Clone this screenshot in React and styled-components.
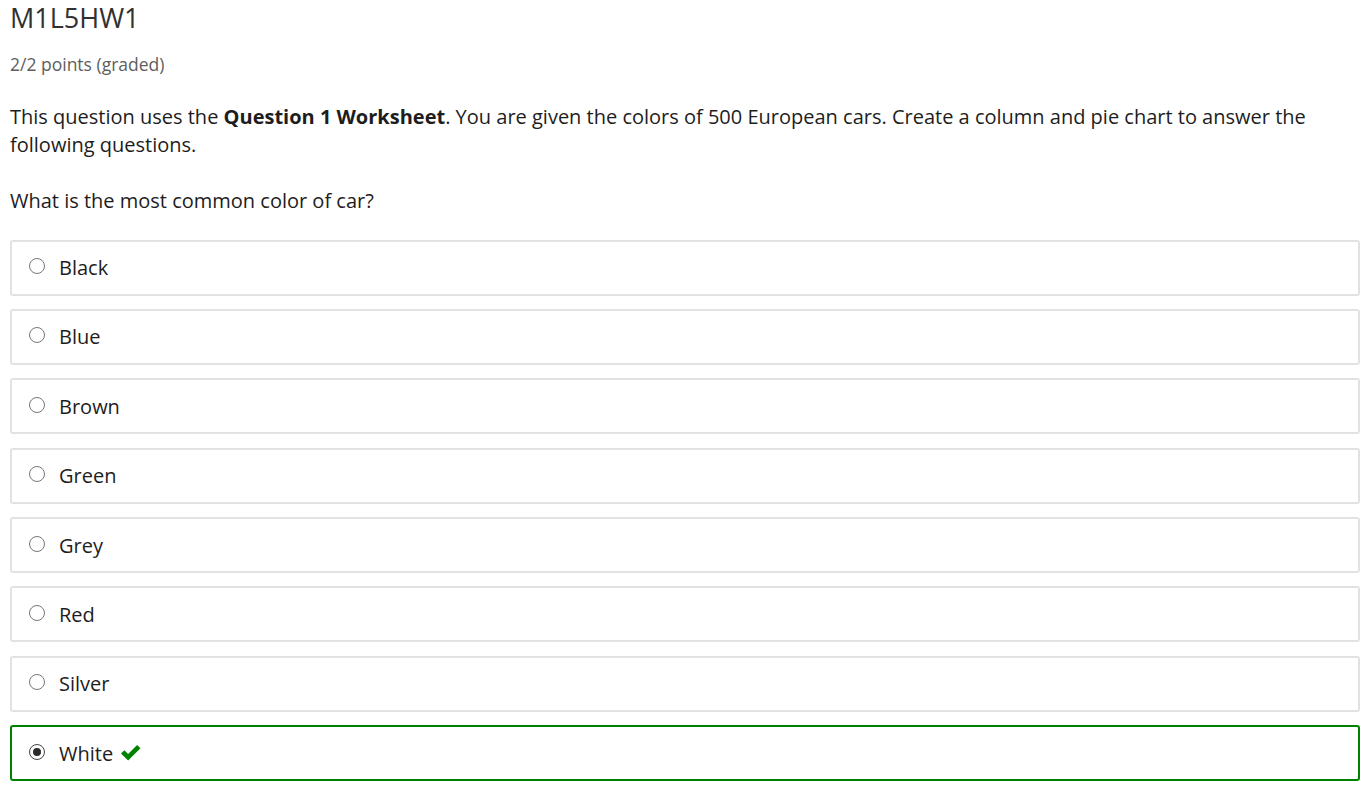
import React from "react";
import styled, { createGlobalStyle } from "styled-components";

const Global = createGlobalStyle`
  html, body { margin: 0; padding: 0; background: #fff; }
  body { font-family: "Open Sans", "Liberation Sans", sans-serif; color: #313131; }
`;

const Page = styled.div`
  padding: 0 11px 0 10px;
`;

const Title = styled.h2`
  margin: 0;
  font-size: 27px;
  font-weight: 400;
  line-height: 36px;
  color: #313131;
`;

const Points = styled.div`
  margin-top: 16px;
  font-size: 17.5px;
  line-height: 24px;
  color: #5e5e5e;
`;

const Paragraph = styled.p`
  margin: 27px 0 0;
  font-size: 20px;
  line-height: 28px;
  color: #1d1d1d;
  & b { font-weight: 700; }
`;

const Question = styled(Paragraph)`
  margin-top: 28px;
`;

const Choices = styled.div`
  margin-top: 24.5px;
  display: flex;
  flex-direction: column;
  gap: 13.4px;
`;

const Choice = styled.label`
  display: flex;
  align-items: center;
  height: 52px;
  padding: 0 0 0 17px;
  border: 2px solid ${(p) => (p.$correct ? "#008100" : "#e2e2e2")};
  border-radius: 3px;
  font-size: 20px;
  color: #1d1d1d;
`;

const Radio = styled.span`
  box-sizing: border-box;
  width: 16px;
  height: 16px;
  border-radius: 50%;
  border: 1.6px solid ${(p) => (p.$checked ? "#444" : "#777")};
  background: #fff;
  display: flex;
  align-items: center;
  justify-content: center;
  margin-right: 14px;
  margin-top: -3px;
  &::after {
    content: "";
    display: ${(p) => (p.$checked ? "block" : "none")};
    width: 8px;
    height: 8px;
    border-radius: 50%;
    background: #2b2b2b;
  }
`;

const Check = styled.svg`
  width: 23px;
  height: 19px;
  margin-left: 6px;
  margin-top: -2px;
`;

const colors = ["Black", "Blue", "Brown", "Green", "Grey", "Red", "Silver", "White"];

export default function App() {
  return (
    <Page>
      <Global />
      <Title>M1L5HW1</Title>
      <Points>2/2 points (graded)</Points>
      <Paragraph>
        This question uses the <b>Question 1 Worksheet</b>. You are given the colors of 500 European cars. Create a column and pie chart to answer the following questions.
      </Paragraph>
      <Question>What is the most common color of car?</Question>
      <Choices>
        {colors.map((c) => {
          const correct = c === "White";
          return (
            <Choice key={c} $correct={correct}>
              <Radio $checked={correct} />
              {c}
              {correct && (
                <Check viewBox="0 0 24 20">
                  <path d="M2 11 L5.5 7.5 L9.5 11.5 L19 2 L22.5 5.5 L9.5 18.5 Z" fill="#008100" />
                </Check>
              )}
            </Choice>
          );
        })}
      </Choices>
    </Page>
  );
}
